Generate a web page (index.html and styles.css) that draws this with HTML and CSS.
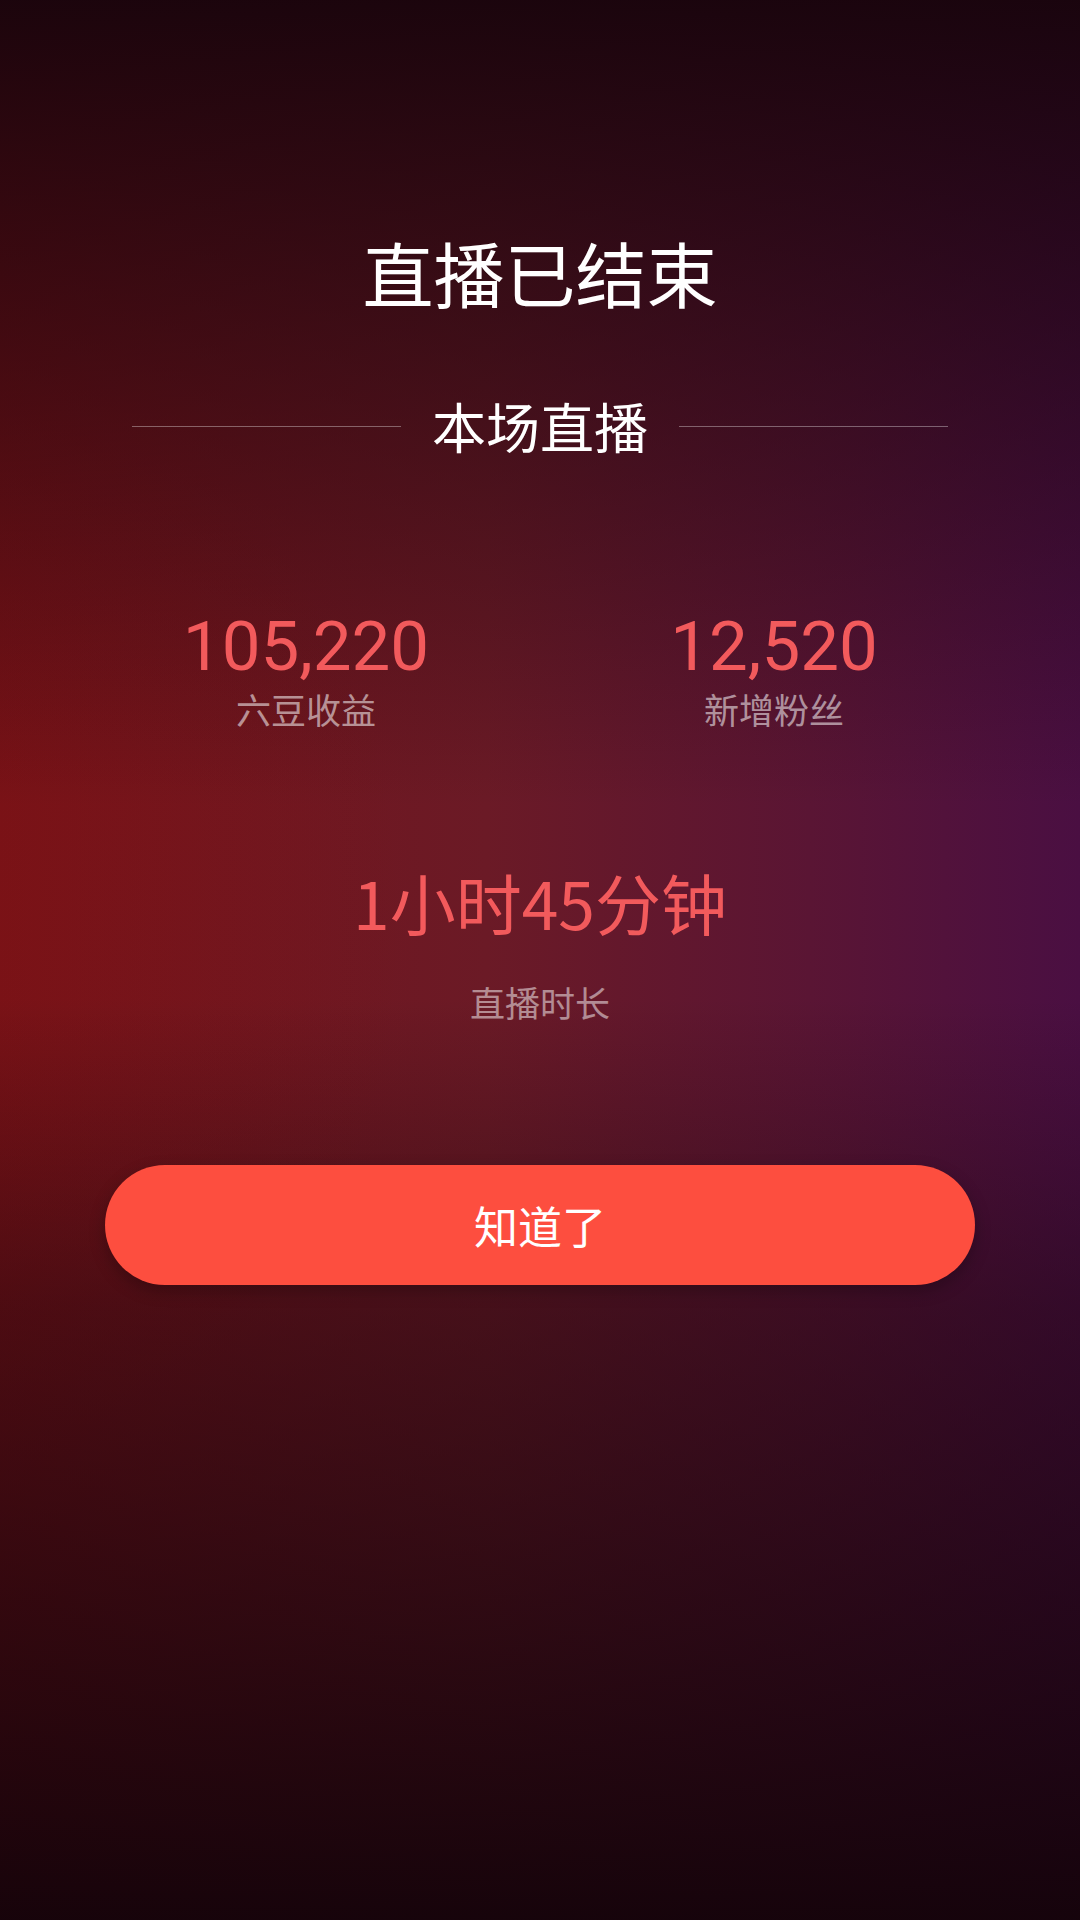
FILE: index.html
```html
<!DOCTYPE html>
<html lang="zh-CN">
<head>
    <meta charset="UTF-8">
    <meta name="viewport" content="width=device-width, initial-scale=1.0">
    <title>直播已结束</title>
    <link rel="stylesheet" href="styles.css">
</head>
<body>
    <div class="page">
        <h1 class="title">直播已结束</h1>

        <div class="section_head">
            <span class="line"></span>
            <span class="section_text">本场直播</span>
            <span class="line"></span>
        </div>

        <div class="stats">
            <div class="stat">
                <div class="stat_num">105,220</div>
                <div class="stat_label">六豆收益</div>
            </div>
            <div class="stat">
                <div class="stat_num">12,520</div>
                <div class="stat_label">新增粉丝</div>
            </div>
        </div>

        <div class="duration">1小时45分钟</div>
        <div class="duration_label">直播时长</div>

        <button class="ok_btn">知道了</button>
    </div>
</body>
</html>
```

FILE: styles.css
```css
html, body{
    margin: 0;
    padding: 0;
}
body{
    font-family: "Noto Sans CJK SC", "Noto Sans", sans-serif;
    background-color: #1c0510;
}
.page{
    box-sizing: border-box;
    min-height: 1920px;
    padding-top: 231px;
    display: flex;
    flex-direction: column;
    align-items: stretch;
    background:
        linear-gradient(to bottom,
            rgba(24, 4, 12, 0.96) 0%,
            rgba(24, 4, 12, 0.55) 18%,
            rgba(24, 4, 12, 0) 42%,
            rgba(24, 4, 12, 0) 52%,
            rgba(24, 4, 12, 0.45) 68%,
            rgba(20, 3, 10, 0.97) 100%),
        radial-gradient(ellipse 600px 800px at 0% 48%, rgba(130, 18, 20, 0.25), rgba(130, 18, 20, 0) 70%),
        linear-gradient(to right, #781217 0%, #6b1a26 45%, #5a1534 75%, #4a0f42 100%);
}
.title{
    margin: 0;
    text-align: center;
    font-size: 71px;
    line-height: 80px;
    font-weight: 400;
    color: #ffffff;
}
.section_head{
    margin-top: 85px;
    padding: 0 132px;
    display: flex;
    align-items: center;
    gap: 31px;
    height: 60px;
}
.line{
    flex: 1;
    height: 1px;
    background-color: rgba(255, 255, 255, 0.35);
}
.section_text{
    font-size: 54px;
    line-height: 60px;
    color: #ffffff;
}
.stats{
    margin-top: 151px;
    padding: 0 72px;
    display: grid;
    grid-template-columns: 1fr 1fr;
}
.stat{
    text-align: center;
}
.stat_num{
    font-family: Roboto, "Noto Sans", sans-serif;
    font-weight: 400;
    font-size: 69px;
    line-height: 80px;
    color: #f25a5c;
}
.stat_label{
    font-size: 35px;
    line-height: 44px;
    color: rgba(255, 255, 255, 0.55);
}
.duration{
    margin-top: 130px;
    text-align: center;
    font-size: 66px;
    line-height: 80px;
    color: #f25a5c;
}
.duration_label{
    margin-top: 39px;
    text-align: center;
    font-size: 35px;
    line-height: 44px;
    color: rgba(255, 255, 255, 0.5);
}
.ok_btn{
    margin: 141px 105px 0;
    height: 120px;
    border: 0;
    border-radius: 60px;
    background-color: #fd4e3f;
    color: #ffffff;
    font-family: "Noto Sans CJK SC", sans-serif;
    font-size: 44px;
    box-shadow: 0 6px 16px rgba(0, 0, 0, 0.25);
    outline: none;
}
```
